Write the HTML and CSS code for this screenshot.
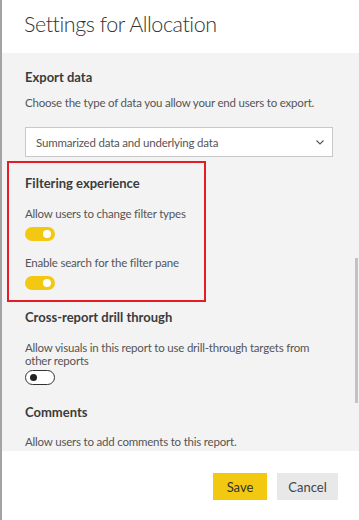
FILE: index.html
```html
<!DOCTYPE html>
<html>
<head>
<meta charset="utf-8">
<link rel="stylesheet" href="styles.css">
</head>
<body>
<div class="frame">
  <div class="header">
    <h1 class="title">Settings for Allocation</h1>
  </div>
  <div class="panel">
    <div class="content">
      <div class="heading">Export data</div>
      <div class="text mt10">Choose the type of data you allow your end users to export.</div>
      <div class="select">
        <span>Summarized data and underlying data</span>
        <svg class="chev" width="8" height="5" viewBox="0 0 8 5"><polyline points="0.5,0.5 4,4 7.5,0.5" fill="none" stroke="#555" stroke-width="1.1"/></svg>
      </div>
      <div class="highlight">
        <div class="heading">Filtering experience</div>
        <div class="text mt15">Allow users to change filter types</div>
        <div class="toggle on"><span class="knob"></span></div>
        <div class="text mt14">Enable search for the filter pane</div>
        <div class="toggle on"><span class="knob"></span></div>
      </div>
      <div class="heading mt7">Cross-report drill through</div>
      <div class="text multi">Allow visuals in this report to use drill-through targets from other reports</div>
      <div class="toggle off"><span class="knob"></span></div>
      <div class="heading mt19">Comments</div>
      <div class="text mt14">Allow users to add comments to this report.</div>
    </div>
    <div class="scrollbar"></div>
  </div>
  <div class="footer">
    <button class="btn save">Save</button>
    <button class="btn cancel">Cancel</button>
  </div>
</div>
</body>
</html>
```

FILE: styles.css
```css
html, body {
  margin: 0;
  padding: 0;
  width: 359px;
  height: 520px;
  overflow: hidden;
  background: #fff;
  font-family: "Segoe UI", Lato, "Noto Sans", sans-serif;
}
.frame {
  width: 359px;
  height: 520px;
  box-sizing: border-box;
  border-left: 2px solid #a3a3a3;
  display: flex;
  flex-direction: column;
}
.header {
  height: 53px;
  flex: none;
  padding-left: 22px;
  box-sizing: border-box;
}
.title {
  margin: 0;
  padding-top: 9px;
  font-size: 21.5px;
  letter-spacing: -0.45px;
  line-height: 30px;
  font-weight: 300;
  color: #333;
}
.panel {
  height: 398px;
  flex: none;
  background: #f3f3f3;
  position: relative;
  overflow: hidden;
}
.content {
  padding: 16px 0 0 23px;
}
.heading {
  font-size: 13px;
  line-height: 16px;
  font-weight: 700;
  color: #3b3b3b;
  white-space: nowrap;
}
.text {
  font-size: 11.5px;
  letter-spacing: -0.2px;
  line-height: 16px;
  color: #555;
  white-space: nowrap;
}
.mt7 { margin-top: 7px; }
.mt10 { margin-top: 10px; }
.mt14 { margin-top: 14px; }
.mt15 { margin-top: 15px; }
.mt19 { margin-top: 19px; }
.multi {
  margin-top: 16px;
  line-height: 13px;
  width: 300px;
  white-space: normal;
}
.select {
  margin-top: 16px;
  width: 308px;
  height: 30px;
  box-sizing: border-box;
  background: #fff;
  border: 1px solid #c8c8c8;
  display: flex;
  align-items: center;
  justify-content: space-between;
  padding: 0 8px 0 10px;
  font-size: 11.5px;
  letter-spacing: -0.2px;
  color: #555;
}
.chev { display: block; }
.highlight {
  margin-top: 4px;
  margin-left: -18px;
  width: 199px;
  box-sizing: border-box;
  border: 2px solid #e51c23;
  padding: 12px 0 10px 16px;
}
.toggle {
  width: 30px;
  height: 14px;
  box-sizing: border-box;
  border-radius: 8px;
  margin-top: 5px;
  display: flex;
  align-items: center;
}
.toggle.on {
  background: #f2c811;
  justify-content: flex-end;
  padding-right: 4px;
}
.toggle.on .knob {
  width: 8px;
  height: 8px;
  border-radius: 50%;
  background: #fff;
}
.toggle.off {
  margin-top: 3px;
  height: 15px;
  background: #fff;
  border: 1px solid #333;
  padding-left: 4px;
}
.toggle.off .knob {
  width: 7px;
  height: 7px;
  border-radius: 50%;
  background: #222;
}
.scrollbar {
  position: absolute;
  right: 1px;
  top: 205px;
  width: 3px;
  height: 145px;
  background: #c2c2c2;
}
.footer {
  flex: 1;
  display: flex;
  justify-content: flex-end;
  align-items: flex-start;
  gap: 10px;
  padding: 22px 21px 0 0;
}
.btn {
  height: 27px;
  border: none;
  margin: 0;
  font-family: inherit;
  font-size: 13px;
  color: #333;
  padding: 0;
}
.save {
  width: 54px;
  background: #f2c811;
}
.cancel {
  width: 61px;
  background: #e8e8e8;
  color: #444;
}
```
